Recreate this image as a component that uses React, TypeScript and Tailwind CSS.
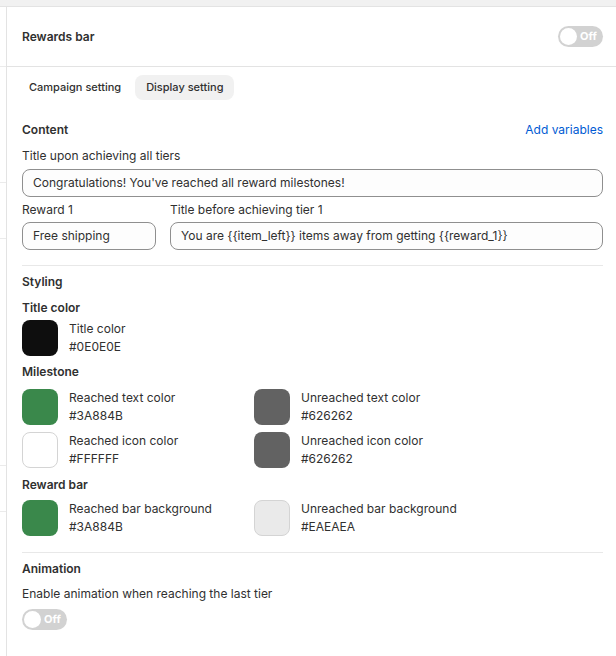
import { useState } from "react";

type Swatch = { label: string; hex: string; bordered?: boolean };

function Toggle({ on = false }: { on?: boolean }) {
  return (
    <button
      type="button"
      className={`relative flex h-[21px] w-[45px] items-center rounded-full ${on ? "bg-[#303030]" : "bg-[#d2d2d2]"}`}
    >
      <span className="ml-[2px] h-[17px] w-[17px] rounded-full bg-white" />
      <span className="ml-[3px] text-[11px] font-bold leading-none text-white">Off</span>
    </button>
  );
}

function ColorItem({ label, hex, bordered }: Swatch) {
  return (
    <div className="flex items-center gap-[11px]">
      <div
        className={`h-9 w-9 shrink-0 rounded-lg ${bordered ? "border border-[#d4d4d4]" : ""}`}
        style={{ backgroundColor: hex }}
      />
      <div className="text-[12px] leading-[18px] text-[#303030]">
        <div>{label}</div>
        <div>{hex}</div>
      </div>
    </div>
  );
}

function TextField({ value, className }: { value: string; className?: string }) {
  return (
    <div
      className={`flex h-[28px] items-center rounded-lg border border-[#8f8f8f] bg-[#fdfdfd] px-[10px] text-[12px] text-[#303030] ${className ?? ""}`}
    >
      {value}
    </div>
  );
}

export default function App() {
  const [tab, setTab] = useState("display");

  return (
    <div className="h-[656px] w-[616px] overflow-hidden bg-white font-['Inter',sans-serif] text-[#303030]">
      <div className="h-[7px] border-b border-[#e3e3e3] bg-[#f1f1f1]" />
      <div className="flex h-[649px]">
        {/* cut-off list on the left */}
        <div className="flex w-[7px] shrink-0 flex-col border-r border-[#e3e3e3]">
          <div className="h-[60px] border-b border-[#ebebeb]" />
          <div className="h-[116px] border-b border-[#ebebeb]" />
          <div className="h-[56px] border-b border-[#ebebeb]" />
          <div className="h-[227px] border-b border-[#ebebeb]" />
          <div className="h-[46px] border-b border-[#ebebeb]" />
        </div>

        <div className="min-w-0 flex-1">
          <div className="flex h-[60px] items-center justify-between border-b border-[#e3e3e3] pl-[15px] pr-[13px]">
            <span className="text-[12px] font-semibold">Rewards bar</span>
            <Toggle />
          </div>

          <div className="pl-[15px] pr-[13px]">
            <div className="ml-[-4px] flex gap-[3px] pt-2">
              <button
                type="button"
                onClick={() => setTab("campaign")}
                className={`h-[25px] rounded-lg px-[11px] text-[11px] font-medium ${tab === "campaign" ? "bg-[#f1f1f1]" : ""}`}
              >
                Campaign setting
              </button>
              <button
                type="button"
                onClick={() => setTab("display")}
                className={`h-[25px] rounded-lg px-[11px] text-[11px] font-medium ${tab === "display" ? "bg-[#f1f1f1]" : ""}`}
              >
                Display setting
              </button>
            </div>

            {/* Content */}
            <div className="mt-5 flex items-center justify-between leading-5">
              <span className="text-[12px] font-semibold">Content</span>
              <span className="text-[12px] text-[#005bd3]">Add variables</span>
            </div>
            <div className="mt-2 text-[12px] leading-4">Title upon achieving all tiers</div>
            <TextField className="mt-[5px]" value="Congratulations! You've reached all reward milestones!" />

            <div className="mt-[5px] flex gap-[14px]">
              <div className="w-[134px] shrink-0">
                <div className="text-[12px] leading-4">Reward 1</div>
                <TextField className="mt-1" value="Free shipping" />
              </div>
              <div className="min-w-0 flex-1">
                <div className="text-[12px] leading-4">Title before achieving tier 1</div>
                <TextField className="mt-1" value="You are {{item_left}} items away from getting {{reward_1}}" />
              </div>
            </div>

            <div className="mt-[15px] h-px bg-[#e8e8e8]" />

            {/* Styling */}
            <div className="mt-[6px] text-[12px] font-semibold leading-5">Styling</div>
            <div className="mt-2 text-[12px] font-semibold leading-4">Title color</div>
            <div className="mt-1">
              <ColorItem label="Title color" hex="#0E0E0E" />
            </div>

            <div className="mt-2 text-[12px] font-semibold leading-4">Milestone</div>
            <div className="mt-[9px] grid grid-cols-[232px_1fr] gap-y-[7px]">
              <ColorItem label="Reached text color" hex="#3A884B" />
              <ColorItem label="Unreached text color" hex="#626262" />
              <ColorItem label="Reached icon color" hex="#FFFFFF" bordered />
              <ColorItem label="Unreached icon color" hex="#626262" />
            </div>

            <div className="mt-[9px] text-[12px] font-semibold leading-4">Reward bar</div>
            <div className="mt-[7px] grid grid-cols-[232px_1fr]">
              <ColorItem label="Reached bar background" hex="#3A884B" />
              <ColorItem label="Unreached bar background" hex="#EAEAEA" bordered />
            </div>

            <div className="mt-4 h-px bg-[#e8e8e8]" />

            {/* Animation */}
            <div className="mt-[6px] text-[12px] font-semibold leading-5">Animation</div>
            <div className="mt-[7px] text-[12px] leading-4">Enable animation when reaching the last tier</div>
            <div className="mt-[7px]">
              <Toggle />
            </div>
          </div>
        </div>
      </div>
    </div>
  );
}
